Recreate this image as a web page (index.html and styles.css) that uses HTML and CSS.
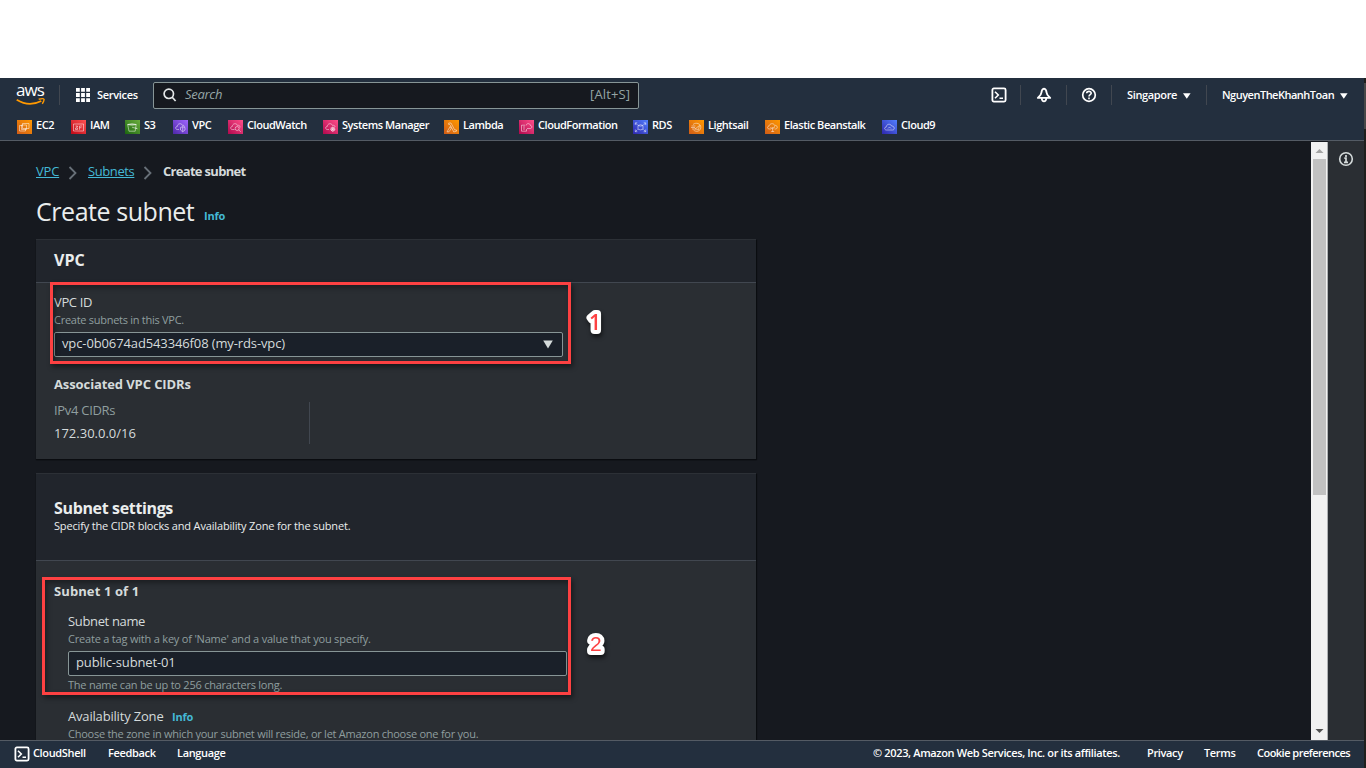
FILE: index.html
```html
<!DOCTYPE html>
<html lang="en">
<head>
<meta charset="utf-8">
<title>Create subnet | VPC Management Console</title>
<link rel="stylesheet" href="styles.css">
</head>
<body>
<svg class="defs" width="0" height="0" aria-hidden="true">
  <defs>
    <linearGradient id="g-orange" x1="0" y1="1" x2="1" y2="0"><stop offset="0" stop-color="#d05c17"/><stop offset="1" stop-color="#f90"/></linearGradient>
    <linearGradient id="g-red" x1="0" y1="1" x2="1" y2="0"><stop offset="0" stop-color="#bd0816"/><stop offset="1" stop-color="#ff5252"/></linearGradient>
    <linearGradient id="g-green" x1="0" y1="1" x2="1" y2="0"><stop offset="0" stop-color="#1b660f"/><stop offset="1" stop-color="#6cae3e"/></linearGradient>
    <linearGradient id="g-purple" x1="0" y1="1" x2="1" y2="0"><stop offset="0" stop-color="#4d27a8"/><stop offset="1" stop-color="#a166ff"/></linearGradient>
    <linearGradient id="g-pink" x1="0" y1="1" x2="1" y2="0"><stop offset="0" stop-color="#b0084d"/><stop offset="1" stop-color="#ff4f8b"/></linearGradient>
    <linearGradient id="g-blue" x1="0" y1="1" x2="1" y2="0"><stop offset="0" stop-color="#2e27ad"/><stop offset="1" stop-color="#527fff"/></linearGradient>
  </defs>
</svg>
<div class="console">
  <header class="nav">
    <div class="nav-top">
      <div class="logo"><span class="logo-text">aws</span>
        <svg class="smile" width="30" height="9" viewBox="0 0 30 9" fill="none" stroke="#f90"><path d="M.7 1.8Q13 9.3 25.3 3" stroke-width="1.8"/><path d="M22.7 1.2Q27.5.2 28 1.2T26.3 5.8" stroke-width="1.4"/></svg>
      </div>
      <i class="sep"></i>
      <div class="services">
        <svg width="14" height="14" viewBox="0 0 14 14" fill="#fff"><path d="M0 0h3.8v3.8H0zM5.1 0h3.8v3.8H5.1zM10.2 0H14v3.8h-3.8zM0 5.1h3.8v3.8H0zM5.1 5.1h3.8v3.8H5.1zM10.2 5.1H14v3.8h-3.8zM0 10.2h3.8V14H0zM5.1 10.2h3.8V14H5.1zM10.2 10.2H14V14h-3.8z"/></svg>
        <span>Services</span>
      </div>
      <div class="search">
        <svg width="14" height="14" viewBox="0 0 14 14" fill="none" stroke="#e4e7e8" stroke-width="1.7"><circle cx="5.8" cy="5.8" r="4.7"/><path d="M9 9l3.6 4"/></svg>
        <span class="search-text">Search</span><span class="shortcut">[Alt+S]</span>
      </div>
      <div class="tools">
        <svg class="shell-icon" width="16" height="16" viewBox="0 0 16 16" fill="none" stroke="#fff" stroke-width="1.8"><rect x="1.4" y="1.4" width="13.2" height="13.2" rx="1.5"/><path d="M4 4.7L7.3 8 4 11.2M8.5 11.3h3.5" stroke-width="1.6"/></svg>
        <i class="sep"></i>
        <svg class="bell" width="16" height="16" viewBox="0 0 16 16" fill="none" stroke="#fff" stroke-width="1.8" stroke-linejoin="round"><path d="M8 1.6Q5.700 2 5.400 5.600C5.200 8 3.800 9 1.800 10.900H14.200C12.200 9 10.800 8 10.600 5.600Q10.300 2 8 1.600zM5.700 11.500Q6 14.300 8 14.300T10.300 11.500"/></svg>
        <i class="sep"></i>
        <svg class="help" width="16" height="16" viewBox="0 0 16 16" fill="none" stroke="#fff"><circle cx="8" cy="8" r="6.3" stroke-width="1.7"/><path d="M5.700 6.300C5.800 3.700 10.300 3.800 10.200 6.300 10.100 7.700 8 7.700 8 9.500M8 10.600V12.200" stroke-width="1.600"/></svg>
        <i class="sep"></i>
        <span class="region">Singapore</span><svg class="caret" width="8" height="6" viewBox="0 0 8 6"><path d="M0 .3H7.600L3.800 5.700z" fill="#fff"/></svg>
        <i class="sep"></i>
        <span class="account">NguyenTheKhanhToan</span><svg class="caret" width="8" height="6" viewBox="0 0 8 6"><path d="M0 .3H7.600L3.800 5.700z" fill="#fff"/></svg>
      </div>
    </div>
    <nav class="favorites">
      <a><svg viewBox="0 0 15 14"><rect width="15" height="14" fill="url(#g-orange)"/><path d="M5.500 3.500h6.500v5H5.500zM5.500 5.500h-3v5.500h6V8.500M4.500 7.500V5h5v4.500h-5z"/></svg><span>EC2</span></a>
      <a><svg viewBox="0 0 15 14"><rect width="15" height="14" fill="url(#g-red)"/><path d="M2.500 4h10v7h-10zM4.500 6h2v1h-1.500M4.500 8h2v1.500h-2zM8.500 9.800V6h2.500M8.500 7.700h2"/></svg><span>IAM</span></a>
      <a><svg viewBox="0 0 15 14"><rect width="15" height="14" fill="url(#g-green)"/><path d="M2.700 4.500h8.500l-1 6.700H4zM2.700 4.500Q7 2.800 11.200 4.500 7 6 2.700 4.500M7 7.200l5.300 1.500-1.700-.8"/></svg><span>S3</span></a>
      <a><svg viewBox="0 0 15 14"><rect width="15" height="14" fill="url(#g-purple)"/><path d="M6 9.500H4.300C2 9.300 2.200 6.500 4.200 6.600 4.500 3 8.800 3 9.300 5.300 11 5 11.500 6 11.500 6.700M7.500 7.500L9.700 6.700 12 7.500V10L9.700 11.800 7.500 10zM9.700 6.700v5"/></svg><span>VPC</span></a>
      <a><svg viewBox="0 0 15 14"><rect width="15" height="14" fill="url(#g-pink)"/><path d="M6.500 9.500H4.300C2 9.300 2.200 6.500 4.200 6.600 4.500 3 8.800 3 9.300 5.300 11.500 5 12 6 12 7.500M10.700 9.800l2 2"/><circle cx="9.200" cy="8.500" r="2"/></svg><span>CloudWatch</span></a>
      <a><svg viewBox="0 0 15 14"><rect width="15" height="14" fill="url(#g-pink)"/><path d="M6 9.500H4.300C2 9.300 2.200 6.500 4.200 6.600 4.500 3 8.800 3 9.300 5.300 11.500 5 12 6 12 7M9.800 6.500v5.500M7 9.200h5.500M8 7.300l3.500 3.700M11.500 7.300L8 11"/><circle cx="9.800" cy="9.200" r="1.800"/></svg><span>Systems Manager</span></a>
      <a><svg viewBox="0 0 15 14"><rect width="15" height="14" fill="url(#g-orange)"/><path d="M4.700 3H7l3.800 7.200 1.300-.5.700 1.300-3 1L6.500 5.500 5.700 4.500h-1zM6.200 6.500L3 11.800h2L7.200 8.500z"/></svg><span>Lambda</span></a>
      <a><svg viewBox="0 0 15 14"><rect width="15" height="14" fill="url(#g-pink)"/><path d="M6 5.200H2.500v6h5V9M4 7h2M4 9h2M8 8.500h3.500C13.500 8 13 5.500 11.500 5.500 11 3 7.500 3 7 5.500"/></svg><span>CloudFormation</span></a>
      <a><svg viewBox="0 0 15 14"><rect width="15" height="14" fill="url(#g-blue)"/><path d="M2.500 3l2 2M12.500 3l-2 2M2.500 11.500l2-2M12.500 11.500l-2-2M2.300 5V2.800h2M10.700 2.800h2V5M2.300 9.500v2.200h2M10.700 11.700h2V9.500M5 5.500v3.700q2.500 1.300 5 0V5.500Q7.500 4 5 5.500q2.500 1.200 5 0"/></svg><span>RDS</span></a>
      <a><svg viewBox="0 0 15 14"><rect width="15" height="14" fill="url(#g-orange)"/><path d="M4 4.500C7 2 12 3.500 11.800 7.500 11.500 11.500 7 12.300 4.500 10M2.500 6h4M2 7.500h4M3 9h3M6 9l4.500-3.500-1 4z"/></svg><span>Lightsail</span></a>
      <a><svg viewBox="0 0 15 14"><rect width="15" height="14" fill="url(#g-orange)"/><path d="M6 9H4C2 8.800 2.200 6 4 6.200 4.500 3 9 3 9.500 5.300 12.800 4.800 13.200 9 10.500 9H9.500M7.700 11.500V7M5.700 7q.3 2 2 2M9.700 6.200q0 2-2 2M6.200 11.500h3"/></svg><span>Elastic Beanstalk</span></a>
      <a><svg viewBox="0 0 15 14"><rect width="15" height="14" fill="url(#g-blue)"/><path d="M4.300 10C2 9.800 2.200 7 4.200 7.100 4.500 3.500 9 3.500 9.500 6 12.800 5.700 13.200 10 10.500 10zM6 8.500L7.500 7 9 8.500"/></svg><span>Cloud9</span></a>
    </nav>
  </header>

  <div class="body">
    <main class="content">
      <div class="crumbs">
        <a class="crumb-vpc">VPC</a>
        <svg width="10" height="16" viewBox="0 0 10 16" fill="none" stroke="#687078" stroke-width="1.800"><path d="M1.500 2l6 6-6 6"/></svg>
        <a class="crumb-subnets">Subnets</a>
        <svg width="10" height="16" viewBox="0 0 10 16" fill="none" stroke="#687078" stroke-width="1.800"><path d="M1.500 2l6 6-6 6"/></svg>
        <b class="crumb-current">Create subnet</b>
      </div>
      <div class="title"><h1>Create subnet</h1><a class="info">Info</a></div>

      <section class="card vpc-card">
        <h2 class="card-head vpc-head">VPC</h2>
        <div class="card-body">
          <div class="label">VPC ID</div>
          <div class="hint hint-vpc">Create subnets in this VPC.</div>
          <div class="field select"><span>vpc-0b0674ad543346f08 (my-rds-vpc)</span><svg width="10" height="9" viewBox="0 0 10 9"><path d="M.2.500H9.800L5 8.500z" fill="#d5dbdb"/></svg></div>
          <h3 class="assoc">Associated VPC CIDRs</h3>
          <div class="cidr"><div class="key">IPv4 CIDRs</div><div class="value">172.30.0.0/16</div></div>
        </div>
      </section>

      <section class="card subnet-card">
        <div class="card-head subnet-head"><h2>Subnet settings</h2><p>Specify the CIDR blocks and Availability Zone for the subnet.</p></div>
        <div class="card-body">
          <h3 class="count">Subnet 1 of 1</h3>
          <div class="subnet-form">
            <div class="label label-name">Subnet name</div>
            <div class="hint hint-tag">Create a tag with a key of 'Name' and a value that you specify.</div>
            <div class="field input"><span>public-subnet-01</span></div>
            <div class="hint hint-name">The name can be up to 256 characters long.</div>
            <div class="zone"><span class="label label-zone">Availability Zone</span><a class="info">Info</a></div>
            <div class="hint hint-zone">Choose the zone in which your subnet will reside, or let Amazon choose one for you.</div>
          </div>
        </div>
      </section>
    </main>
    <div class="scrollbar">
      <svg width="16" height="17" viewBox="0 0 16 17"><path d="M4.500 11h8l-4-4z" fill="#a3a3a3"/></svg>
      <div class="thumb"></div>
      <svg class="down" width="16" height="17" viewBox="0 0 16 17"><path d="M4.500 6h8l-4 4z" fill="#505050"/></svg>
    </div>
    <aside class="rail"><svg width="16" height="16" viewBox="0 0 16 16" fill="none" stroke="#d5dbdb"><circle cx="8" cy="8" r="6.300" stroke-width="1.600"/><path d="M8 4v1.900M6.300 7.200H8v4M6 11.300h4" stroke-width="1.700"/></svg></aside>
  </div>

  <footer class="footer">
    <svg width="16" height="16" viewBox="0 0 16 16" fill="none" stroke="#fff" stroke-width="1.800"><rect x="1.400" y="1.400" width="13.200" height="13.200" rx="1.500"/><path d="M4 4.700L7.300 8 4 11.200M8.500 11.300H12" stroke-width="1.600"/></svg>
    <span class="f-shell">CloudShell</span><span class="f-feedback">Feedback</span><span class="f-language">Language</span>
    <span class="f-copy">© 2023, Amazon Web Services, Inc. or its affiliates.</span><span class="f-privacy">Privacy</span><span class="f-terms">Terms</span><span class="f-cookies">Cookie preferences</span>
  </footer>
</div>
<div class="edge"><div class="edge-thumb"></div></div>

<div class="mark mark-vpc"></div>
<div class="mark mark-name"></div>
<svg class="num num-one" width="32" height="36" viewBox="0 0 32 36"><text x="10" y="25">1</text></svg>
<svg class="num num-two" width="32" height="36" viewBox="0 0 32 36"><text x="10" y="25">2</text></svg>
</body>
</html>
```
FILE: styles.css
```css
* { box-sizing: border-box; }
body { margin: 0; width: 1366px; height: 768px; padding-top: 78px; display: flex; overflow: hidden; position: relative; background: #fff; font-family: "Open Sans", "Noto Sans", sans-serif; color: #d5dbdb; }
h1, h2, h3, p { margin: 0; }
span, a, b, h1, h2, h3, p, .label, .hint { white-space: nowrap; }
svg { display: block; flex: none; }
.defs { position: absolute; }
.console { width: 1364px; height: 690px; display: flex; flex-direction: column; }
.edge { width: 2px; height: 690px; background: #1f1f1d; padding-top: 5px; }
.edge-thumb { height: 46px; background: #484848; }

.nav { height: 63px; background: #232f3e; border-bottom: 1px solid #545b64; color: #fff; font-size: 11px; font-weight: 600; }
.nav-top { height: 34px; display: flex; align-items: center; padding-left: 16px; }
.logo { width: 43px; height: 30px; }
.logo-text { display: block; height: 17px; line-height: 20px; font-size: 17px; font-weight: 500; letter-spacing: -.9px; }
.smile { margin-top: 1px; }
.sep { width: 1px; height: 20px; background: #414750; }
.services { display: flex; align-items: center; gap: 7px; width: 93px; padding-left: 16px; }
.services span { padding-bottom: 2px; letter-spacing: -.3px; }
.search { width: 486px; height: 27px; border: 1px solid #879596; border-radius: 2px; background: #16191f; display: flex; align-items: center; padding: 0 8px 0 9px; font-size: 13px; font-weight: 400; color: #95a5a6; }
.search-text { margin-left: 8px; padding-bottom: 2px; font-style: italic; letter-spacing: -.3px; }
.shortcut { margin-left: auto; padding-bottom: 2px; letter-spacing: .1px; }
.tools { display: flex; align-items: center; margin-left: 352px; }
.shell-icon { margin-right: 13px; }
.bell { margin: 0 14px 0 15px; }
.help { margin: 0 14px; }
.region { width: 56px; margin-left: 15px; padding-bottom: 2px; letter-spacing: -.35px; }
.account { width: 118px; margin-left: 15px; padding-bottom: 2px; letter-spacing: -.5px; }
.caret { margin-top: 1px; }
.region + .caret { margin-right: 15px; }
.favorites { display: grid; grid-template-columns: 54px 54px 48px 55px 95px 121px 75px 114px 56px 76px 117px 60px; padding: 6px 0 0 17px; }
.favorites a { display: flex; gap: 4px; letter-spacing: -.45px; }
.favorites span { line-height: 14px; height: 14px; }
.favorites svg { width: 15px; height: 14px; margin-top: 2px; fill: none; stroke: #fff; stroke-opacity: .7; stroke-width: .7; }
.favorites rect { stroke: none; }

.body { height: 599px; display: flex; overflow: hidden; background: #16191f; }
.content { width: 1311px; padding: 20px 0 0 36px; }
.crumbs { display: flex; height: 20px; line-height: 20px; font-size: 13px; }
.crumbs a { color: #44b9d6; text-decoration: underline; }
.crumbs svg { margin-top: 4px; margin-right: 10px; }
.crumb-vpc { width: 32px; letter-spacing: -.2px; }
.crumb-subnets { width: 55px; letter-spacing: -.4px; }
.crumb-current { letter-spacing: -.7px; }
.title { display: flex; height: 36px; margin-top: 12px; line-height: 36px; }
h1 { width: 168px; font-size: 25px; font-weight: 400; letter-spacing: -.45px; color: #eaeded; }
.info { font-size: 11px; font-weight: 700; color: #44b9d6; letter-spacing: -.2px; }
.title .info { padding-top: 5px; }
.card { width: 720px; background: #2a2e33; border-top: 1px solid #2c3036; box-shadow: 0 1px 1px #0a0c10, 1px 1px 1px #0c0e12; }
.card-head { background: #21252c; border-bottom: 1px solid #414750; padding-left: 18px; color: #eaeded; }
h2 { font-size: 16px; font-weight: 700; letter-spacing: -.35px; }
.vpc-card { height: 220px; margin-top: 10px; }
.vpc-head { height: 43px; line-height: 40px; letter-spacing: 0; }
.card-body { padding-left: 18px; }
.label { font-size: 13px; line-height: 18px; letter-spacing: -.35px; }
.vpc-card .label { margin-top: 10px; }
.hint { font-size: 11px; line-height: 16px; color: #8f9e9f; letter-spacing: -.2px; }
.hint-vpc { margin-top: 1px; letter-spacing: -.27px; }
.field { height: 25px; border: 1px solid #879596; border-radius: 2px; background: #1a2029; font-size: 13px; letter-spacing: -.15px; display: flex; align-items: center; padding-left: 7px; }
.field span { line-height: 20px; height: 23px; }
.select { width: 509px; margin-top: 4px; justify-content: space-between; padding-right: 9px; }
.select span { letter-spacing: -.12px; }
h3 { font-size: 13px; line-height: 20px; font-weight: 700; letter-spacing: -.1px; }
.assoc { margin-top: 17px; }
.cidr { width: 256px; height: 42px; margin-top: 8px; border-right: 1px solid #414750; font-size: 13px; letter-spacing: -.3px; }
.key { height: 23px; line-height: 16px; color: #8f9e9f; }
.value { line-height: 16px; letter-spacing: 0; }
.subnet-card { height: 300px; margin-top: 14px; }
.subnet-head { height: 87px; padding-top: 24px; }
.subnet-head h2 { height: 20px; line-height: 20px; }
.subnet-head p { font-size: 11px; line-height: 15px; letter-spacing: -.16px; }
.count { margin-top: 20px; letter-spacing: .1px; }
.subnet-form { padding: 11px 0 0 14px; }
.hint-tag { line-height: 17px; }
.input { width: 499px; margin-top: 4px; }
.hint-name { margin-top: 1px; letter-spacing: -.23px; }
.zone { display: flex; height: 19px; margin-top: 14px; }
.label-zone { width: 104px; letter-spacing: -.18px; }
.zone .info { line-height: 20px; }
.hint-zone { letter-spacing: -.25px; }
.scrollbar { width: 17px; display: flex; flex-direction: column; margin-top: 1px; background: #f1f1f1; border-right: 1px solid #aeb1b3; }
.thumb { width: 13px; height: 336px; margin-left: 2px; background: #c1c1c1; }
.down { margin-top: auto; }
.rail { width: 36px; background: #2a2e33; padding: 10px 0 0 10px; }

.footer { height: 28px; display: flex; align-items: center; padding: 0 0 1px 14px; background: #232f3e; border-top: 1px solid #545b64; font-size: 11px; font-weight: 600; letter-spacing: -.35px; color: #fff; }
.footer span { line-height: 16px; padding-bottom: 3px; }
.f-shell { width: 75px; margin-left: 3px; }
.f-feedback { width: 69px; }
.f-language { width: 696px; }
.f-copy { width: 274px; }
.f-privacy { width: 57px; }
.f-terms { width: 53px; }
.f-cookies { letter-spacing: -.52px; }

.mark { position: absolute; border: 3px solid #fd4142; box-shadow: 2px 3px 5px rgba(0, 0, 0, .45), inset 2px 3px 5px rgba(0, 0, 0, .35); }
.mark-vpc { left: 50px; top: 282px; width: 521px; height: 82px; }
.mark-name { left: 42px; top: 577px; width: 529px; height: 118px; }
.num { position: absolute; filter: drop-shadow(1px 3px 2px rgba(0, 0, 0, .6)); }
.num text { font: 600 21px "Open Sans", sans-serif; fill: #fd4142; stroke: #fff; stroke-width: 8px; stroke-linejoin: round; paint-order: stroke; }
.num-one { left: 579px; top: 305px; }
.num-two { left: 580px; top: 626px; }
.num-two text { font: 21px "Liberation Sans", Arial, sans-serif; }
```
